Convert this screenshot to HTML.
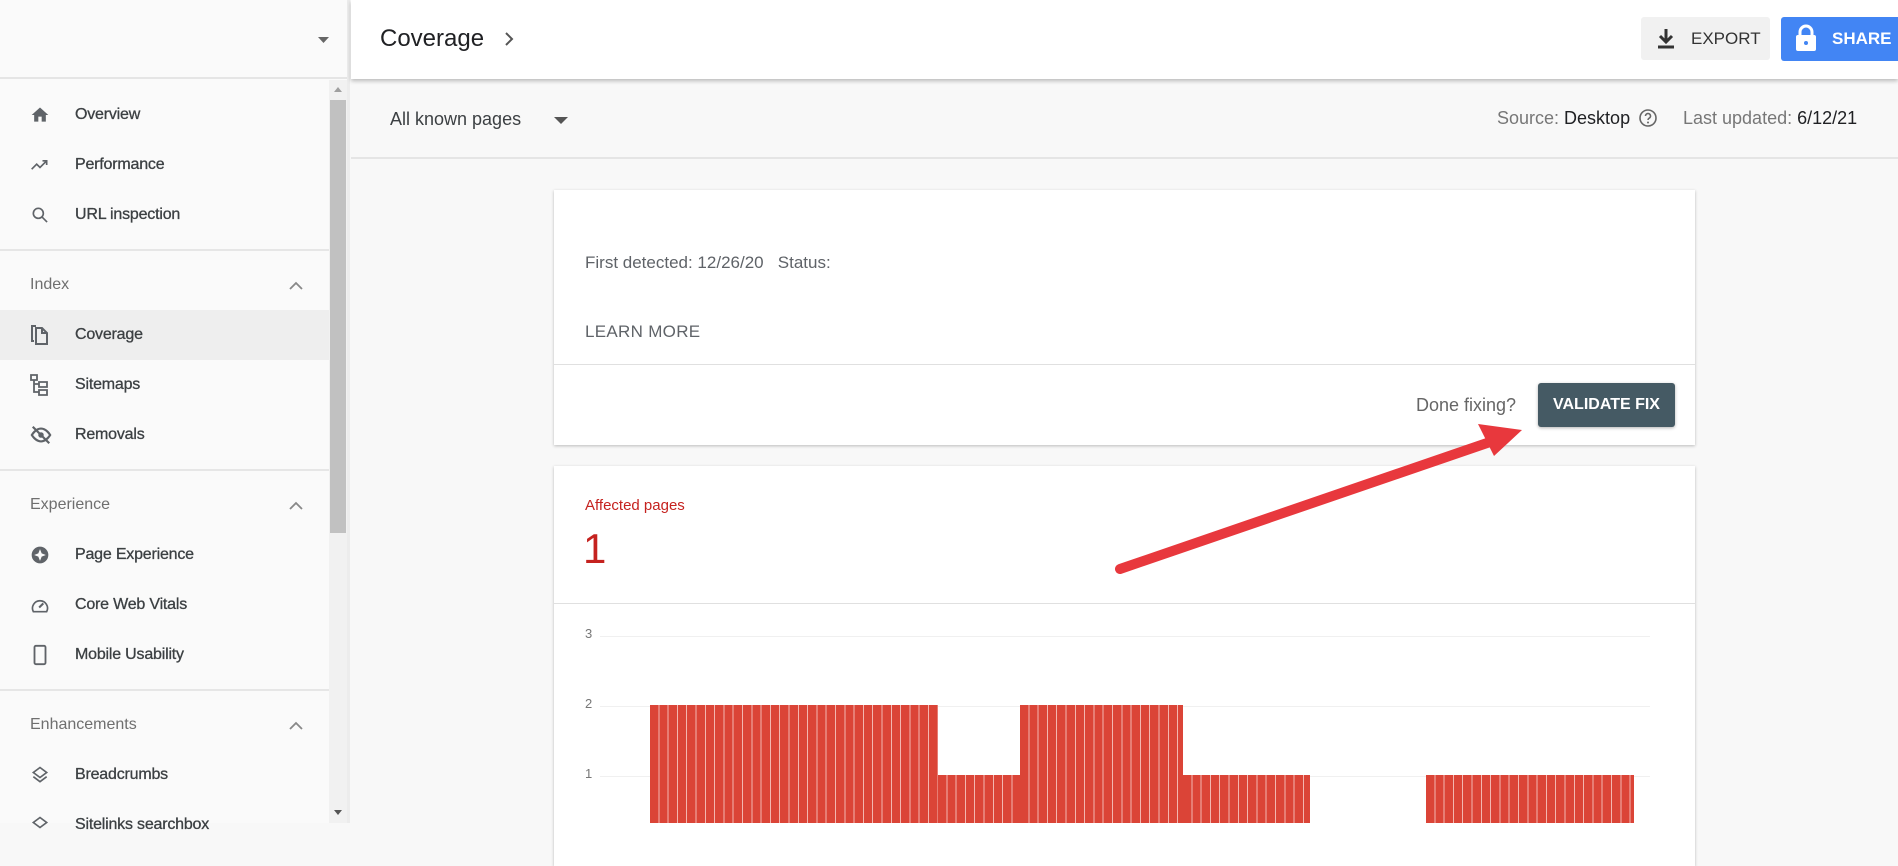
<!DOCTYPE html>
<html><head><meta charset="utf-8"><style>
*{box-sizing:border-box;margin:0;padding:0}
body{width:1898px;height:823px;overflow:hidden;background:#f8f8f8;font-family:"Liberation Sans",Roboto,sans-serif;position:relative;color:#202124}
.abs{position:absolute}
.sb{left:0;top:0;width:350px;height:823px;background:#fafafa}
.nav{position:absolute;left:0;width:329px;height:50px;display:flex;align-items:center;font-size:16px;font-weight:bold;color:#3c4043;letter-spacing:-0.2px}
.nav .t{position:absolute;left:75px;font-weight:normal;-webkit-text-stroke:0.3px #3c4043}
.nav svg{position:absolute;left:30px}
.sec{position:absolute;left:30px;font-size:16px;color:#6f6f6f}
.hr{position:absolute;left:0;width:329px;height:2px;background:#e6e6e6}
</style></head><body>
<!-- sidebar -->
<div class="abs sb"></div>
<div class="abs" style="left:0;top:0;width:350px;height:79px;background:#fafafa;border-bottom:2px solid #e5e5e5"></div>
<svg class="abs" style="left:317px;top:36px" width="14" height="8"><path d="M1 1h11l-5.5 6z" fill="#666"/></svg>
<!-- scrollbar -->
<div class="abs" style="left:329px;top:80px;width:18px;height:743px;background:#f1f1f1"></div>
<div class="abs" style="left:330px;top:100px;width:16px;height:433px;background:#c1c1c1"></div>
<svg class="abs" style="left:334px;top:87px" width="8" height="6"><path d="M0 5h8L4 0z" fill="#a0a0a0"/></svg>
<svg class="abs" style="left:334px;top:810px" width="8" height="6"><path d="M0 0h8L4 5z" fill="#555"/></svg>
<div class="abs" style="left:347px;top:0;width:3px;height:823px;background:#ececec"></div>

<div class="nav" style="top:90px"><svg width="20" height="20" viewBox="0 0 24 24"><path d="M10 20v-6h4v6h5v-8h3L12 3 2 12h3v8z" fill="#5f6368"/></svg><span class="t">Overview</span></div>
<div class="nav" style="top:140px"><svg width="20" height="20" viewBox="0 0 24 24"><path d="M2 17l6-6 4 4 8-8M15 7h5v5" stroke="#5f6368" stroke-width="2" fill="none"/></svg><span class="t">Performance</span></div>
<div class="nav" style="top:190px"><svg width="20" height="20" viewBox="0 0 24 24"><circle cx="10" cy="10" r="6" stroke="#5f6368" stroke-width="2" fill="none"/><path d="M14.5 14.5l6 6" stroke="#5f6368" stroke-width="2"/></svg><span class="t">URL inspection</span></div>
<div class="hr" style="top:249px"></div>
<div class="sec" style="top:276px">Index</div>
<svg class="abs" style="left:289px;top:281px" width="14" height="9"><path d="M1 8l6-6 6 6" stroke="#888" stroke-width="1.8" fill="none"/></svg>
<div class="abs" style="left:0;top:310px;width:329px;height:50px;background:#eeeeee"></div>
<div class="nav" style="top:310px"><svg width="20" height="24" viewBox="0 0 20 24"><path d="M6 3H2v15h2M6 5h6l5 5v11H6z" stroke="#5f6368" stroke-width="2" fill="none"/><path d="M12 5v5h5" stroke="#5f6368" stroke-width="2" fill="none"/></svg><span class="t">Coverage</span></div>
<div class="nav" style="top:360px"><svg width="20" height="24" viewBox="0 0 20 24"><path d="M1 2h6v5H1zM9 9h8v5H9zM9 17h8v5H9zM4 7v12h5M4 11h5" stroke="#5f6368" stroke-width="1.8" fill="none"/></svg><span class="t">Sitemaps</span></div>
<div class="nav" style="top:410px"><svg width="22" height="22" viewBox="0 0 24 24"><path d="M2 12s4-7 10-7 10 7 10 7-4 7-10 7S2 12 2 12z" stroke="#5f6368" stroke-width="2.4" fill="none"/><circle cx="12" cy="12" r="3" fill="#5f6368"/><path d="M3 3l18 18" stroke="#5f6368" stroke-width="2.4"/></svg><span class="t">Removals</span></div>
<div class="hr" style="top:469px"></div>
<div class="sec" style="top:496px">Experience</div>
<svg class="abs" style="left:289px;top:501px" width="14" height="9"><path d="M1 8l6-6 6 6" stroke="#888" stroke-width="1.8" fill="none"/></svg>
<div class="nav" style="top:530px"><svg width="20" height="20" viewBox="0 0 24 24"><circle cx="12" cy="12" r="10" fill="#5f6368"/><path d="M12 5l2 5 5 2-5 2-2 5-2-5-5-2 5-2z" fill="#fafafa"/></svg><span class="t">Page Experience</span></div>
<div class="nav" style="top:580px"><svg width="20" height="20" viewBox="0 0 24 24"><path d="M4 20h16a9 9 0 1 0-16 0z" stroke="#5f6368" stroke-width="2" fill="none"/><path d="M11 15l5-5" stroke="#5f6368" stroke-width="2.5"/></svg><span class="t">Core Web Vitals</span></div>
<div class="nav" style="top:630px"><svg width="20" height="22" viewBox="0 0 20 24"><rect x="4" y="2" width="12" height="20" rx="1.5" stroke="#5f6368" stroke-width="2" fill="none"/></svg><span class="t">Mobile Usability</span></div>
<div class="hr" style="top:689px"></div>
<div class="sec" style="top:716px">Enhancements</div>
<svg class="abs" style="left:289px;top:721px" width="14" height="9"><path d="M1 8l6-6 6 6" stroke="#888" stroke-width="1.8" fill="none"/></svg>
<div class="nav" style="top:750px"><svg width="20" height="22" viewBox="0 0 24 24"><path d="M12 3l8 6-8 6-8-6z" stroke="#5f6368" stroke-width="2" fill="none"/><path d="M4 14l8 6 8-6" stroke="#5f6368" stroke-width="2" fill="none"/></svg><span class="t">Breadcrumbs</span></div>
<div class="nav" style="top:800px"><svg width="20" height="22" viewBox="0 0 24 24"><path d="M12 3l8 6-8 6-8-6z" stroke="#5f6368" stroke-width="2" fill="none"/></svg><span class="t">Sitelinks searchbox</span></div>

<!-- top header -->
<div class="abs" style="left:351px;top:0;width:1547px;height:79px;background:#fff;box-shadow:0 2px 4px rgba(0,0,0,0.25)"></div>
<div class="abs" style="left:380px;top:25px;font-size:24px;color:#202124">Coverage</div>
<svg class="abs" style="left:504px;top:31px" width="10" height="16"><path d="M2 2l6 6-6 6" stroke="#555" stroke-width="2" fill="none"/></svg>
<div class="abs" style="left:1641px;top:17px;width:129px;height:43px;background:#f1f1f1;border-radius:3px"></div>
<svg class="abs" style="left:1656px;top:28px" width="20" height="22" viewBox="0 0 20 22"><path d="M10 1v12M4 8l6 6 6-6" stroke="#333" stroke-width="3" fill="none"/><path d="M2 19h16" stroke="#333" stroke-width="3"/></svg>
<div class="abs" style="left:1691px;top:29px;font-size:17px;color:#333">EXPORT</div>
<div class="abs" style="left:1781px;top:17px;width:120px;height:44px;background:#4285f4;border-radius:3px"></div>
<svg class="abs" style="left:1795px;top:24px" width="22" height="28" viewBox="0 0 22 28"><path d="M5 12V8a6 6 0 0 1 12 0v4" stroke="#fff" stroke-width="3" fill="none"/><rect x="1" y="11" width="20" height="16" rx="2" fill="#fff"/><circle cx="11" cy="19" r="2" fill="#4285f4"/></svg>
<div class="abs" style="left:1832px;top:29px;font-size:17px;color:#fff;font-weight:bold">SHARE</div>

<!-- filter bar -->
<div class="abs" style="left:390px;top:109px;font-size:18px;color:#3c4043">All known pages</div>
<svg class="abs" style="left:553px;top:116px" width="16" height="9"><path d="M1 1h14l-7 7z" fill="#555"/></svg>
<div class="abs" style="left:1497px;top:108px;font-size:18px;color:#777">Source: <span style="color:#202124">Desktop</span></div>
<svg class="abs" style="left:1638px;top:108px" width="20" height="20" viewBox="0 0 20 20"><circle cx="10" cy="10" r="8" stroke="#666" stroke-width="1.6" fill="none"/><path d="M7.5 8a2.5 2.5 0 1 1 3.5 2.3c-.7.4-1 .8-1 1.7" stroke="#666" stroke-width="1.6" fill="none"/><circle cx="10" cy="14.5" r="1" fill="#666"/></svg>
<div class="abs" style="left:1683px;top:108px;font-size:18px;color:#777">Last updated: <span style="color:#202124">6/12/21</span></div>
<div class="abs" style="left:351px;top:157px;width:1547px;height:2px;background:#e5e5e5"></div>

<!-- card 1 -->
<div class="abs" style="left:554px;top:190px;width:1141px;height:255px;background:#fff;box-shadow:0 1px 3px rgba(0,0,0,0.25)"></div>
<div class="abs" style="left:585px;top:253px;font-size:17px;color:#5f6368">First detected: 12/26/20&nbsp;&nbsp;&nbsp;Status:</div>
<div class="abs" style="left:585px;top:322px;font-size:17px;color:#5f6368;letter-spacing:0.3px">LEARN MORE</div>
<div class="abs" style="left:554px;top:364px;width:1141px;height:1px;background:#e0e0e0"></div>
<div class="abs" style="left:1416px;top:395px;font-size:18px;color:#666">Done fixing?</div>
<div class="abs" style="left:1538px;top:383px;width:137px;height:44px;background:#455a64;border-radius:3px;box-shadow:0 1px 3px rgba(0,0,0,0.3);color:#fff;font-weight:bold;font-size:16px;line-height:44px;text-align:center">VALIDATE FIX</div>

<!-- card 2 -->
<div class="abs" style="left:554px;top:466px;width:1141px;height:400px;background:#fff;box-shadow:0 1px 3px rgba(0,0,0,0.25)"></div>
<div class="abs" style="left:585px;top:497px;font-size:15px;color:#c5221f">Affected pages</div>
<div class="abs" style="left:583px;top:525px;font-size:42px;color:#c5221f;font-weight:300">1</div>
<div class="abs" style="left:554px;top:603px;width:1141px;height:1px;background:#e0e0e0"></div>
<div class="abs" style="left:585px;top:626px;font-size:13px;color:#777">3</div>
<div class="abs" style="left:585px;top:696px;font-size:13px;color:#777">2</div>
<div class="abs" style="left:585px;top:766px;font-size:13px;color:#777">1</div>
<div class="abs" style="left:600px;top:636px;width:1050px;height:1px;background:#f0f0f0"></div>
<div class="abs" style="left:600px;top:706px;width:1050px;height:1px;background:#f0f0f0"></div>
<div class="abs" style="left:600px;top:776px;width:1050px;height:1px;background:#f0f0f0"></div>
<style>.bar{position:absolute;background:repeating-linear-gradient(90deg,#db4437 0 8.3px,#f3b6b0 8.3px 9.3px)}</style>
<div class="bar" style="left:650px;top:705px;width:288px;height:118px"></div>
<div class="bar" style="left:938px;top:775px;width:82px;height:48px"></div>
<div class="bar" style="left:1020px;top:705px;width:163px;height:118px"></div>
<div class="bar" style="left:1183px;top:775px;width:127px;height:48px"></div>
<div class="bar" style="left:1426px;top:775px;width:208px;height:48px"></div>

<!-- arrow -->
<svg class="abs" style="left:0;top:0" width="1898" height="823">
<path d="M1120 569L1490 442" stroke="#e8383d" stroke-width="10" stroke-linecap="round"/>
<path d="M1522 430L1478 424L1494 456z" fill="#e8383d"/>
</svg>
</body></html>
